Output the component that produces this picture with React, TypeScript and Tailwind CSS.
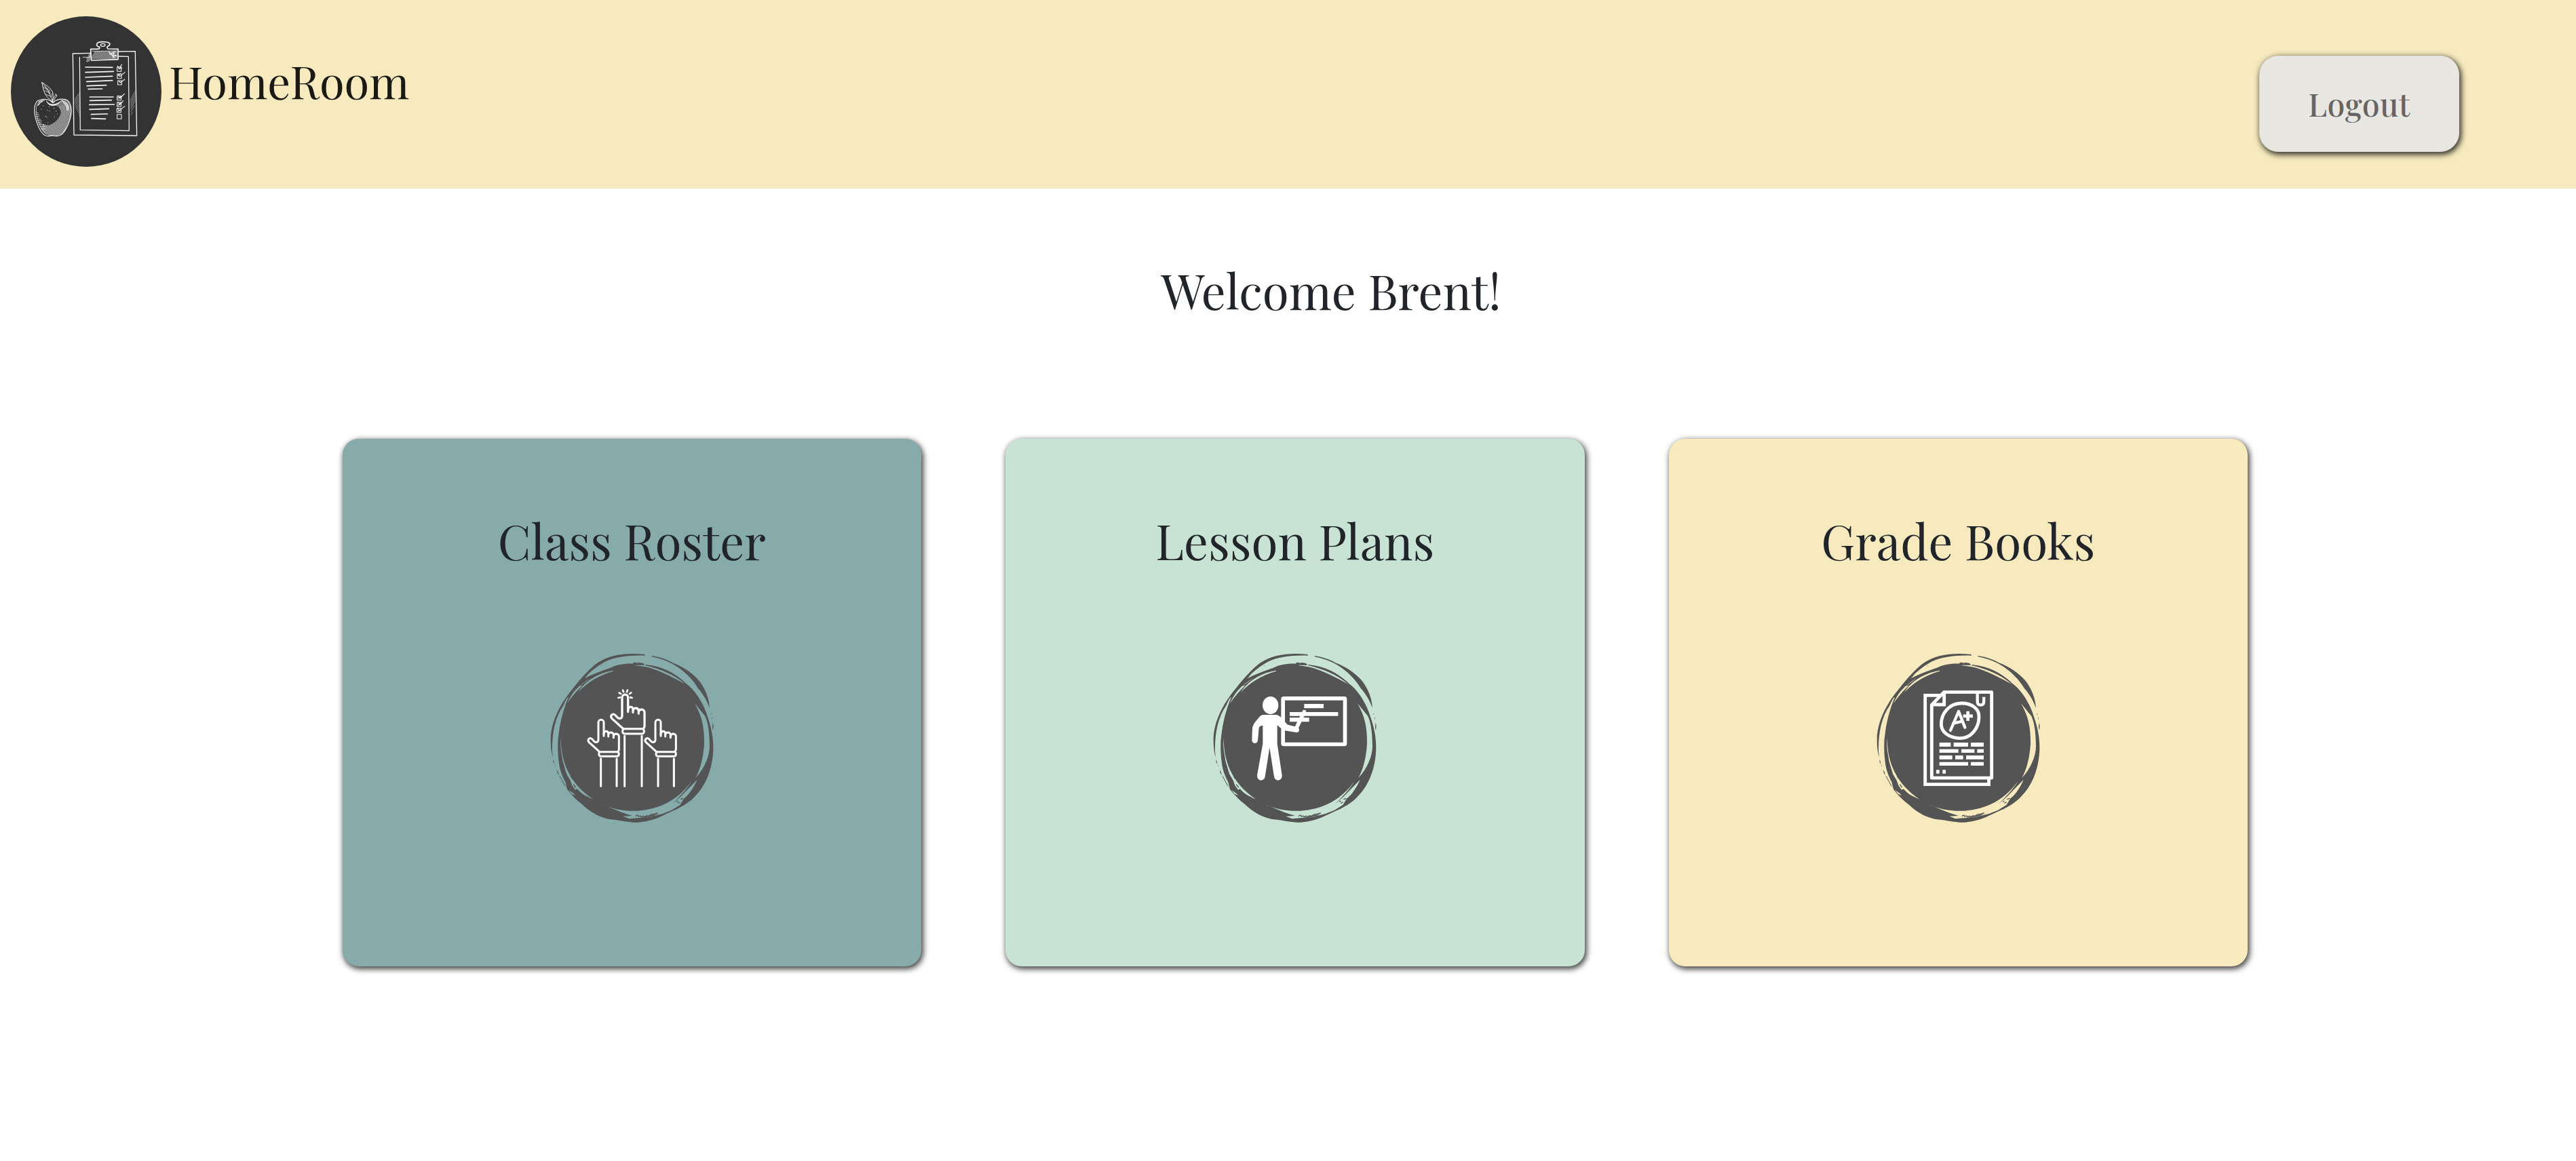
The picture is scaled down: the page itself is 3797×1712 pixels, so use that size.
import type { ReactNode } from "react";

const SERIF = "font-['Playfair_Display','Liberation_Serif',serif]";

function Logo() {
  const stipple: number[][] = [
    [88, 337], [97, 322], [119, 329], [99, 341], [128, 341], [134, 354], [81, 364], [86, 368], [121, 367], [92, 393], [62, 333], [72, 318],
  ];
  const hatch: number[] = Array.from({ length: 34 }, (_, i) => i);
  return (
    <svg viewBox="-72 -78 666 666" className="h-[222px] w-[222px] shrink-0" fill="none" stroke="#f4f4f4" strokeLinecap="round" strokeLinejoin="round">
      <defs>
        <clipPath id="apple-shade">
          <path d="M150 292C175 286 196 305 195 345C194 385 175 435 150 448C125 454 85 455 70 432C50 405 40 380 38 350C50 385 62 400 95 404C125 395 142 372 150 350C145 320 130 318 120 315C140 310 155 300 150 292Z" />
        </clipPath>
        <clipPath id="clip-shade">
          <rect x="286" y="77" width="112" height="34" />
        </clipPath>
      </defs>
      <circle cx="261" cy="255" r="333" fill="#333333" stroke="none" />

      <path d="M112 304C95 284 62 286 46 296C28 312 30 352 38 376C48 410 62 442 82 450C95 454 104 451 113 449C126 453 142 453 152 445C172 425 186 398 193 362C200 322 190 296 168 290C148 286 128 292 114 304" strokeWidth="3.4" />
      <path d="M46 306C34 330 42 372 52 394C60 416 70 432 84 442" strokeWidth="2.4" opacity=".8" />
      <path d="M84 294C90 304 100 311 112 311C130 312 142 300 154 294C142 308 130 317 112 318C98 316 88 308 84 294Z" fill="#f4f4f4" strokeWidth="1" />
      <path d="M50 303C56 295 66 293 76 294M48 316C52 308 58 302 68 298M155 296C172 300 184 316 184 336M160 304C172 310 178 322 178 338" strokeWidth="4.5" opacity=".85" />
      <path d="M112 305C112 290 118 280 126 270M117 305C118 290 124 284 130 276L131 270L124 266" strokeWidth="2.8" />
      <path d="M111 300C104 290 88 284 78 262C70 244 68 226 65 214C82 226 104 238 112 256C118 274 112 288 111 300Z" strokeWidth="3" />
      <path d="M111 298C104 270 86 240 66 216M102 268L98 246M106 280L112 262M96 258L90 240M98 262L78 250M104 276L84 268M88 245L80 230M86 244L72 236" strokeWidth="2.2" />
      <g clipPath="url(#apple-shade)" strokeWidth="2.6" opacity=".85">
        {hatch.map((i) => (
          <path key={i} d={`M${30 + i * 6} 470Q${95 + i * 6} 400 ${100 + i * 6} 280`} />
        ))}
        {hatch.slice(0, 22).map((i) => (
          <path key={`c${i}`} d={`M40 ${340 + i * 6}Q120 ${350 + i * 6} 200 ${290 + i * 6}`} strokeWidth="1.2" />
        ))}
      </g>
      <path d="M38 345l12 6M39 355l14 5M41 364l12 3M43 373l16 6M46 382l18 3M49 391l14 3M52 400l22 2M57 410l22 0M62 420l20 0" strokeWidth="2.4" opacity=".8" />
      {stipple.map(([x, y]) => (
        <circle key={`${x}-${y}`} cx={x} cy={y} r="1.8" fill="#ddd" stroke="none" />
      ))}

      <path d="M280 85L202 87L207 447L485 450L478 77L403 78" strokeWidth="4" />
      <path d="M232 103L235 425L451 428L448 100L403 99" strokeWidth="3.8" />
      <path d="M281 67L284 117L402 113L402 67L357 66C350 58 355 56 362 52C370 44 364 38 350 36C335 34 318 34 310 41C304 50 310 56 320 58C322 64 318 67 312 67Z" strokeWidth="5.2" />
      <ellipse cx="335" cy="49" rx="10" ry="6" strokeWidth="4" />
      <path d="M290 77L395 75" strokeWidth="2.4" />
      <g clipPath="url(#clip-shade)" strokeWidth="2.2" opacity=".9">
        {hatch.slice(0, 24).map((i) => (
          <path key={i} d={`M${278 + i * 5} 114L${302 + i * 5} 76`} />
        ))}
        <path d="M362 80L386 104M372 86L395 76M366 90L398 98M384 76L380 104" strokeWidth="5" />
      </g>
      <path d="M246 103H280M262 122L281 88M266 124L281 98M272 122L281 108M270 96L281 86M262 108L281 97" strokeWidth="2.6" opacity=".85" />

      <path d="M258 147L378 148M258 170L382 166M258 192L377 187M263 211L377 206M264 230L350 227M270 244L332 243M277 279L381 279M277 295L373 293M275 313L385 312M276 334L361 331M283 356L355 354M285 374L347 376" strokeWidth="5" />
      <path d="M398 146h18v20h-18zM399 177h18v20h-18zM401 207h17v18h-17zM398 275h18v18h-18zM398 303h18v18h-18zM397 329h18v18h-18zM398 356h19v20h-19z" strokeWidth="3.2" />
      <path d="M400 143L408 156L418 135M404 153L419 151M402 180L410 188L432 170M404 184L412 176M405 208L412 216L431 201M402 273L410 285L430 265M401 285L418 275M402 302L410 313L425 296M402 316L414 305M400 328L408 340L431 320M402 342L416 334" strokeWidth="3.4" />
      <path d="M211 290L230 262M210 300L232 268M211 308L232 278M212 316L232 288M215 324L232 298M217 331L233 308M220 337L233 318M223 344L234 328M226 352L234 340M230 362L235 352" strokeWidth="2.2" opacity=".6" />
      <path d="M456 294L478 252M457 304L479 262M457 314L478 274M458 323L478 286M459 332L477 297M459 343L474 318M459 358L466 345" strokeWidth="2.2" opacity=".55" />
    </svg>
  );
}

function BrushBadge({ gap, children }: { gap: string; children: ReactNode }) {
  return (
    <svg viewBox="0 0 870 870" className="h-[290px] w-[290px]" fill="none">
      <g fill="#545454">
        <path d="M482 75C400 66 330 76 275 110C240 135 205 172 160 230C110 290 66 370 65 450C65 490 69 512 75 530L72 506C70 435 82 355 122 300C140 274 152 268 170 250C195 228 206 184 240 154C262 134 284 119 306 107C350 86 410 78 482 80Z" />
        <path d="M430 112L440 110L446 113L456 111L474 114L481 122L436 123L520 134C590 150 635 172 665 205C700 230 738 285 757 345C775 395 784 440 784 490C782 590 745 668 690 716C645 755 605 766 560 788C520 808 470 820 430 818C385 813 355 806 320 803C270 793 228 762 204 738C175 715 160 700 138 672L130 640C112 605 104 580 101 550C92 480 98 420 110 350C118 300 130 280 138 268L165 225L202 189C240 165 290 148 330 134C365 118 400 115 430 116Z" />
        <path d="M512 81C545 86 575 95 604 112C650 130 690 155 722 192C747 225 765 265 768 313C755 275 738 250 716 224C692 184 655 146 608 119C580 103 545 92 512 85Z" />
        <path d="M76 540l4 8l2 12l-5-8zM84 562l3 8l-3-2zM92 585l6 10l4 14l-7-10zM102 610l6 6l14 26l12 22l-10-12zM771 336l5 2l-2 4zM777 350l3 12l-3-2zM782 378l3 10l-2 24l-3-14zM288 120l3 9l-3-4z" />
      </g>
      <g fill={gap}>
        <path d="M436 121L480 125C550 134 608 162 660 206C615 182 550 144 480 128Z" />
        <path d="M342 146C280 156 222 186 185 243C220 206 270 170 342 149Z" />
        <path d="M242 179C205 200 160 235 138 292C158 262 180 236 206 212L192 216Z" />
        <path d="M138 268L144 264C122 315 104 380 98 450L95 440C98 370 112 310 138 268Z" />
        <path d="M110 444C110 540 140 640 253 716C215 700 200 690 182 670L174 674L160 655L152 632L136 605L128 580L118 545L114 520C108 490 108 465 110 444Z" />
        <path d="M144 674L166 690L174 699L158 692Z" />
        <path d="M702 292C735 350 745 400 744 470C741 530 725 590 705 622C745 580 768 525 768 480C767 420 762 380 748 348Z" />
        <path d="M290 737C340 760 400 770 450 767C550 760 630 718 688 636C670 670 630 710 602 737L640 704L713 629C700 660 678 695 655 712L638 740L600 764L560 780L520 790L466 800L515 792L540 779L500 788L465 797L412 802L385 791L426 789L380 774Z" />
      </g>
      <path d="M484 120C555 127 616 155 661 203C610 167 560 142 484 124Z" fill="#545454" />
      <path d="M440 790l10 -4l3 6l8-3l4 5l10-4l5 4l10-6l8 2l14-8l8 0l20-6M628 733l10-4M622 727l6-4M640 716l12-4M138 560l4 12M146 585l4 18M154 612l6 12M166 650l10 14M124 530l5 20" stroke="#545454" strokeWidth="4" />
      {children}
    </svg>
  );
}

function PointingHand() {
  return (
    <>
      <path d="M300 436V376A12 12 0 0 0 276 376V452C276 464 264 467 256 458L248 449C237 440 226 452 234 463L281 506" />
      <path d="M300 426Q302 415 311 415Q320 416 320 426V438M320 430Q323 420 332 420Q342 421 343 431V443M343 436Q346 426 355 426Q367 428 367 438V496L363 505" />
    </>
  );
}

function HandsIcon() {
  return (
    <g stroke="#fff" strokeWidth="9" strokeLinecap="round" strokeLinejoin="round">
      <PointingHand />
      <g transform="translate(252 0)">
        <PointingHand />
      </g>
      <g transform="translate(80.1 -137.3) scale(1.09 1.07)">
        <PointingHand />
      </g>
      <rect x="278.500" y="506" width="88" height="19.500" rx="8" />
      <rect x="531" y="506" width="88" height="19.500" rx="8" />
      <rect x="383" y="404" width="95" height="22" rx="9" />
      <path d="M287 536V658M357 536V658M392 436V658M468 436V658M540 536V658M610 536V658" />
      <path d="M384 233L387 241M405 233L402 241M368 245L375 249M421 244L414 249M364 267L372 265M425 267L417 265" strokeWidth="8" />
    </g>
  );
}

function TeacherIcon() {
  return (
    <g transform="translate(9 0)" stroke="#fff" strokeLinecap="round" strokeLinejoin="round">
      <ellipse cx="308" cy="300" rx="35" ry="39" fill="#fff" stroke="none" />
      <rect x="363.500" y="269.500" width="274" height="203" rx="3" strokeWidth="17" />
      <path d="M457 294h86v19h-86zM393 330h214v17h-214zM393 355h86v18h-86z" fill="#fff" stroke="none" />
      <path d="M457 329L423 400" strokeWidth="17" />
      <path d="M274 342H335Q350 346 362 362L384 386L425 396Q436 400 435 410Q432 421 422 420L372 412Q360 408 338 388V470L359 610Q360 630 342 632Q328 632 324 616L304 487L284 616Q280 632 265 632Q248 630 249 610L274 470V389Q262 390 257 399L252 455Q250 468 238 468Q226 466 226 454L228 398Q232 384 240 374L262 348Q268 343 274 342Z" fill="#fff" stroke="none" />
    </g>
  );
}

function GradesIcon() {
  return (
    <g stroke="#fff" strokeWidth="14.500">
      <path d="M352 256H278V650H559.500V626" />
      <path d="M361 242H572V621.500H307V298Z" strokeLinejoin="round" />
      <path d="M362 246V297H309" />
      <path d="M509 245V283Q509 299 523.500 299Q537.500 299 537.500 283V263" strokeWidth="13" />
      <path d="M437 291C485 290 516 315 516 350C516 405 478 446 432 446C382 444 350 418 349 385C348 335 385 292 437 291Z" />
      <path d="M390 411L426 327L454 398M402 380L442 371" strokeWidth="13" strokeLinecap="round" strokeLinejoin="round" />
      <path d="M467 326V369M446 347.500H489" strokeWidth="14" />
      <path
        d="M341 465h50v18h-50zM404 465h64v18h-64zM480 465h57v18h-57zM341 494h84v16h-84zM438 494h58v16h-58zM508 494h29v16h-29zM341 522h57v17h-57zM411 522h35v17h-35zM459 522h78v17h-78zM341 551h127v16h-127zM480 551h57v16h-57zM327 586h14v16h-14zM355 586h14v16h-14z"
        fill="#fff"
        stroke="none"
      />
    </g>
  );
}

const cards = [
  { title: "Class Roster", bg: "bg-[#87aaaa]", gap: "#87aaaa", icon: <HandsIcon /> },
  { title: "Lesson Plans", bg: "bg-[#c8e3d4]", gap: "#c8e3d4", icon: <TeacherIcon /> },
  { title: "Grade Books", bg: "bg-[#f6eabe]", gap: "#f6eabe", icon: <GradesIcon /> },
];

export default function App() {
  return (
    <div className={`min-h-[1712px] w-full bg-white text-[#212529] ${SERIF}`}>
      <header className="flex h-[278px] items-start justify-between bg-[#f6eabe] pl-4 pr-[172px]">
        <a className="flex pt-6">
          <Logo />
          <span className="ml-[11px] pt-[50px] text-[66.800px] leading-[90px] whitespace-nowrap text-[#1a1914]">HomeRoom</span>
        </a>
        <button className="mt-[82px] h-[142px] w-[295px] rounded-[28px] border border-[#dcdad2] bg-[#e9e7e1] text-[46.500px] font-medium leading-[60px] tracking-[0.5px] text-[#676563] shadow-[2px_3px_8px_1px_rgba(0,0,0,0.8)]">
          Logout
        </button>
      </header>
      <main>
        <h1 className="pt-[103.500px] pl-[127px] text-center text-[71px] leading-[92px]">Welcome Brent!</h1>
        <section className="mt-[173.500px] flex gap-[124px] pl-[504.500px]">
          {cards.map((card) => (
            <article
              key={card.title}
              className={`flex h-[778px] w-[853.500px] shrink-0 flex-col items-center rounded-[24px] pt-[103.500px] shadow-[2px_3px_9px_1px_rgba(0,0,0,0.75)] ${card.bg}`}
            >
              <h2 className="text-[71px] leading-[92px]">{card.title}</h2>
              <div className="mt-[97.500px] pl-[7px]">
                <BrushBadge gap={card.gap}>{card.icon}</BrushBadge>
              </div>
            </article>
          ))}
        </section>
      </main>
    </div>
  );
}
